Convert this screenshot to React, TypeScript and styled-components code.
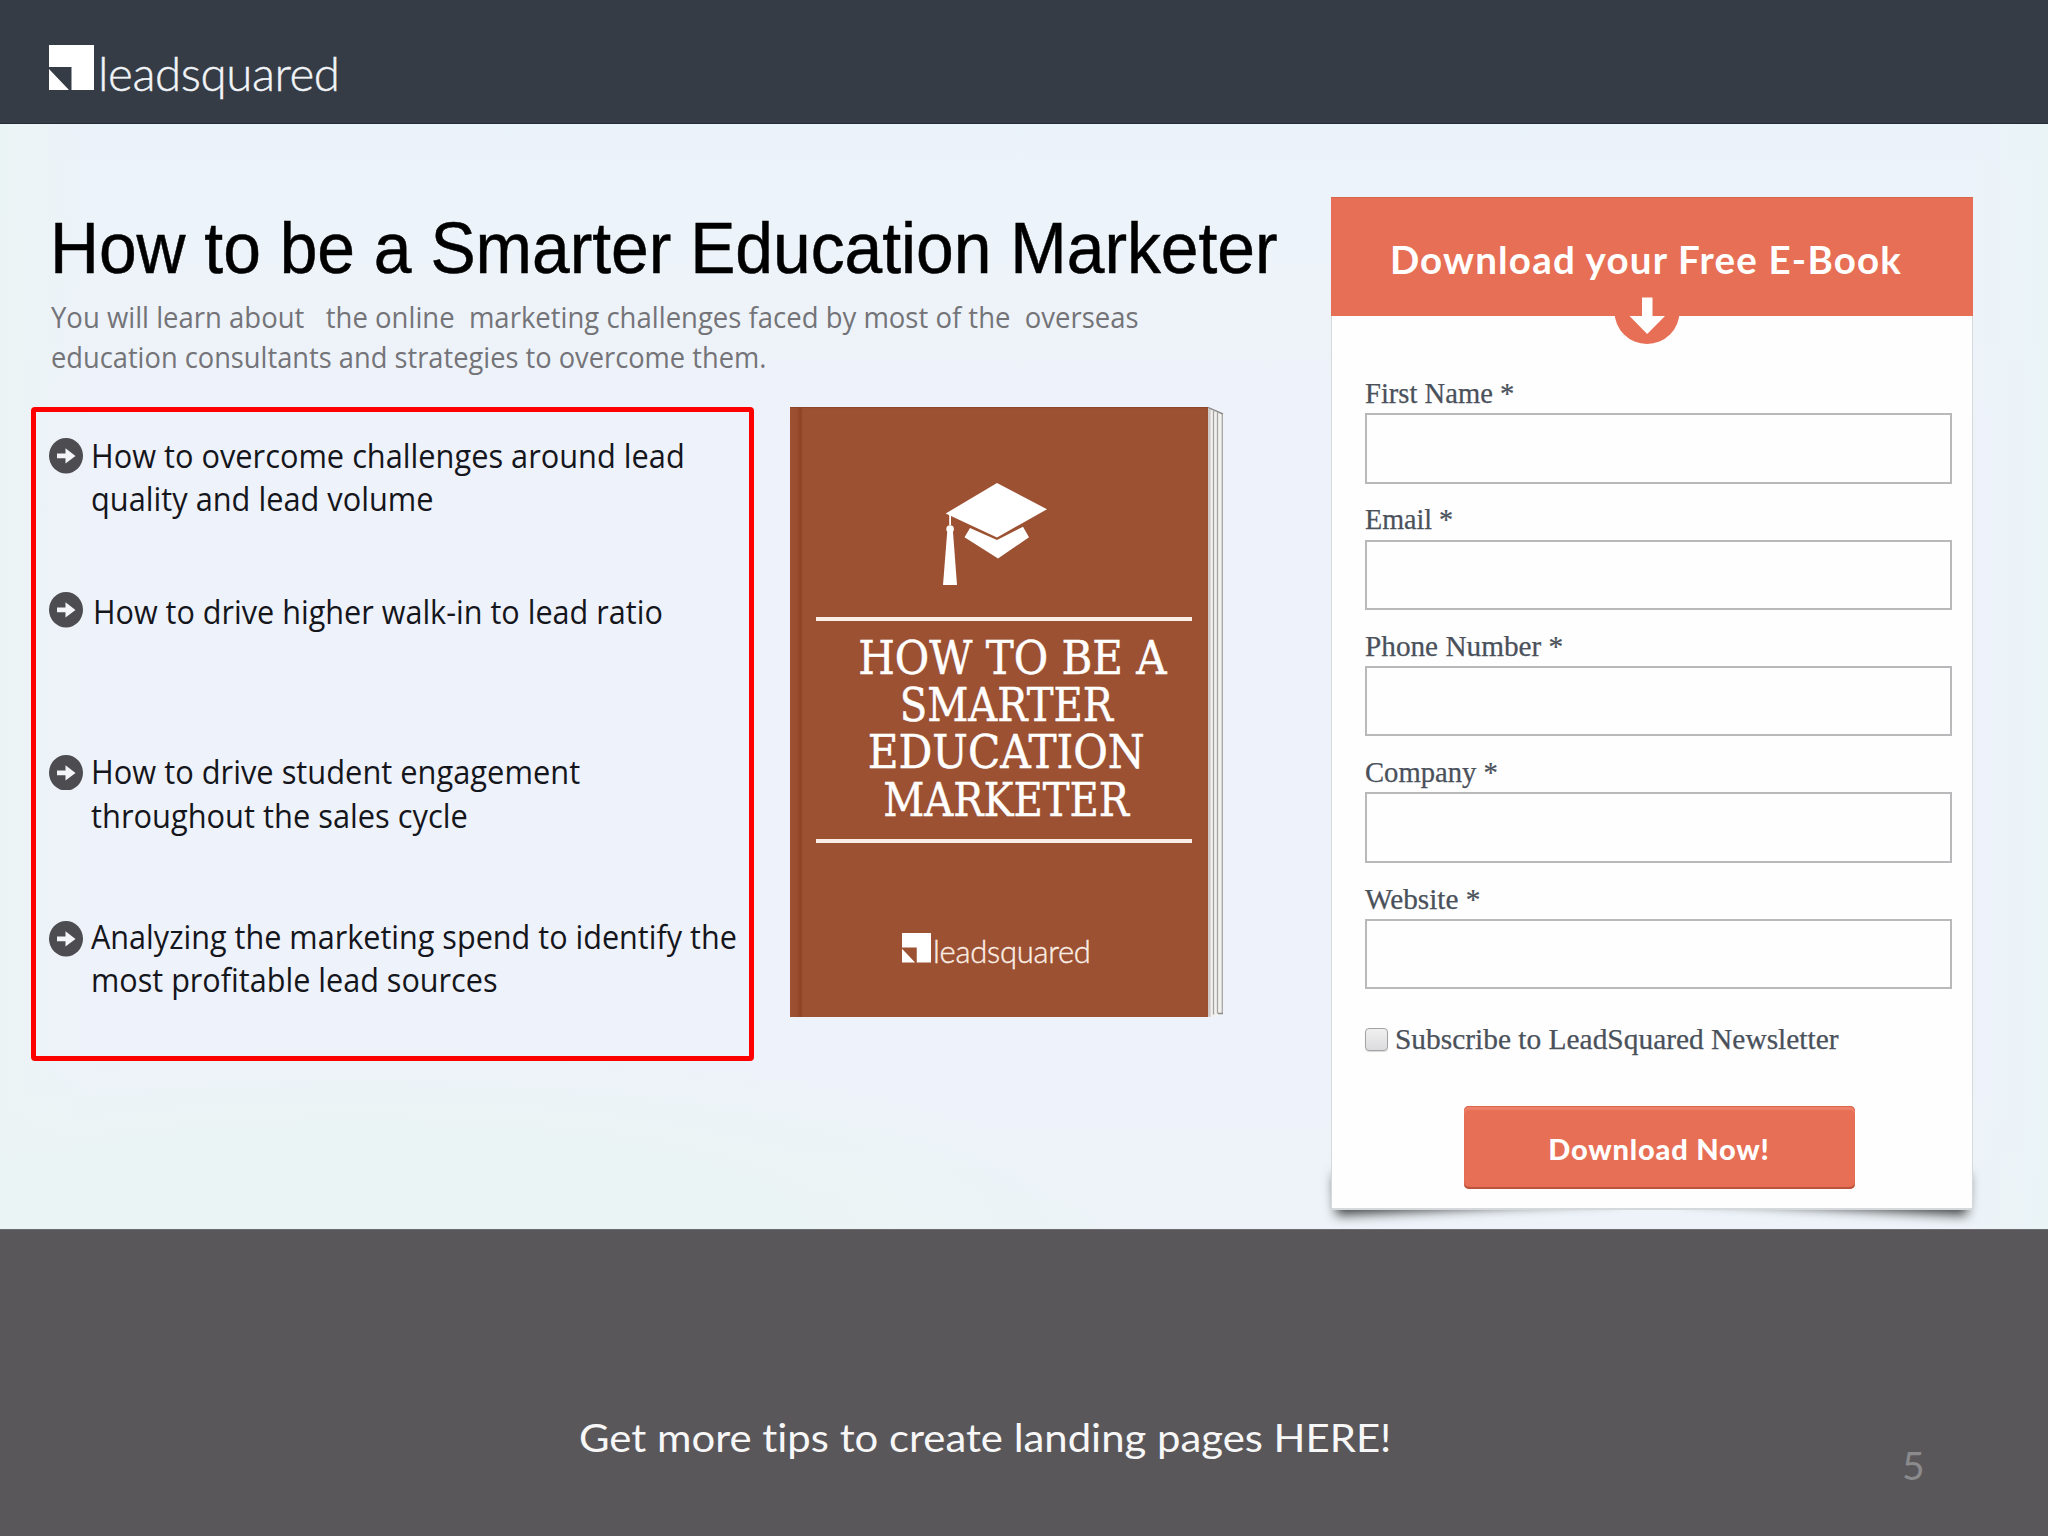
import React from "react";
import styled, { createGlobalStyle } from "styled-components";

const GlobalStyle = createGlobalStyle`
  *, *::before, *::after { box-sizing: border-box; }
  body { margin: 0; background: #5a575b; }
`;

const sans = `"Open Sans", "Noto Sans", sans-serif`;
const lato = `Lato, "Open Sans", sans-serif`;
const serif = `"Liberation Serif", serif`;
const coral = "#e76f55";

const Page = styled.div`
  width: 2048px;
  height: 1536px;
  display: flex;
  flex-direction: column;
  overflow: hidden;
`;

/* One line of copy, narrowed or widened horizontally by $sx. */
const Line = styled.span<{ $sx?: number; $origin?: string }>`
  display: block;
  width: max-content;
  white-space: pre;
  transform: scaleX(${(p) => p.$sx ?? 1});
  transform-origin: ${(p) => p.$origin ?? "left"} center;
`;

const Header = styled.header`
  height: 124px;
  flex: none;
  padding: 45px 0 0 49px;
  background: #363c45;
  border-bottom: 1px solid #262d38;
`;

const LogoRow = styled.div<{ $gap: number }>`
  display: flex;
  align-items: flex-start;
  gap: ${(p) => p.$gap}px;
`;

const LogoMark = styled.svg<{ $size: number }>`
  display: block;
  flex: none;
  width: ${(p) => p.$size}px;
  height: ${(p) => p.$size}px;
`;

const LogoWord = styled.span<{ $size: number; $top: number; $color: string }>`
  margin-top: ${(p) => p.$top}px;
  font: 300 ${(p) => p.$size}px/1 ${lato};
  letter-spacing: -0.009em;
  -webkit-text-stroke: 0.4px ${(p) => p.$color};
  color: ${(p) => p.$color};
`;

function Logo(props: { mark: number; font: number; top: number; gap: number; color: string }) {
  return (
    <LogoRow $gap={props.gap}>
      <LogoMark $size={props.mark} viewBox="0 0 45 45">
        <path d="M0 0H45V45H22.5V22H0ZM0 24L20 45H0Z" fill="#fff" />
      </LogoMark>
      <LogoWord $size={props.font} $top={props.top} $color={props.color}>
        leadsquared
      </LogoWord>
    </LogoRow>
  );
}

const Hero = styled.main`
  position: relative;
  z-index: 0;
  flex: none;
  height: 1105px;
  display: flex;
  align-items: flex-start;
  overflow: hidden;
  background:
    radial-gradient(ellipse 800px 190px at 360px 100%, #ebf4f5 55%, rgba(235, 244, 245, 0) 100%),
    linear-gradient(90deg, #ebf4f5 0, rgba(235, 244, 245, 0) 90px),
    linear-gradient(270deg, #eaf4f7 0, rgba(234, 244, 247, 0) 90px),
    linear-gradient(180deg, #ebf3fa 0, #edf3f9 160px, #eef2fa 300px, #eef2fa 960px, #edf3f8 1105px);
`;

const Intro = styled.section`
  width: 1330.5px;
  flex: none;
  padding: 84px 0 0 31px;
`;

const Title = styled.h1`
  margin: 0;
  padding-left: 18.8px;
  font: 400 72px/80px "Liberation Sans", Arial, sans-serif;
  -webkit-text-stroke: 0.5px #000;
  color: #000;
`;

const Subtitle = styled.p`
  margin: 9px 0 0;
  padding-left: 20px;
  font: 400 29.5px/39.5px ${sans};
  color: #747478;
`;

const Showcase = styled.div`
  display: flex;
  align-items: flex-start;
  gap: 36px;
  margin-top: 30.5px;
`;

const Highlights = styled.ul`
  width: 722.5px;
  height: 654px;
  margin: 0;
  padding: 22.3px 0 0 13px;
  list-style: none;
  border: 5.5px solid #fe0000;
  border-radius: 4px;
`;

const Highlight = styled.li<{ $before: number; $iconTop: number; $gap?: number }>`
  display: flex;
  align-items: flex-start;
  gap: ${(p) => p.$gap ?? 7.5}px;
  margin-top: ${(p) => p.$before}px;
  font: 400 33px/43.4px ${sans};
  color: #15161c;

  svg {
    display: block;
    flex: none;
    width: 34px;
    height: 35.5px;
    margin-top: ${(p) => p.$iconTop}px;
  }
`;

function ArrowBullet() {
  return (
    <svg viewBox="0 0 34 35.5" aria-hidden="true">
      <ellipse cx="17" cy="17.75" rx="17" ry="17.75" fill="#4c4c51" />
      <path d="M8 15.6H16.5V10.3L26.5 17.9L16.5 25.5V20.2H8Z" fill="#f4f5f8" />
    </svg>
  );
}

const Book = styled.div`
  display: flex;
  height: 610.5px;
`;

const Cover = styled.div`
  width: 418px;
  padding-left: 12px;
  background: linear-gradient(90deg, #9f5233 0, #9a4e2f 7px, #8f4425 10px, #8f4425 11px, #9c5132 13px);
  box-shadow: inset 0 1px 1px #8c4527;
`;

const CapIcon = styled.svg`
  display: block;
  width: 106px;
  height: 104px;
  margin: 76px 0 0 140px;
`;

const Rule = styled.div<{ $top: number }>`
  width: 376.5px;
  height: 4px;
  margin: ${(p) => p.$top}px 0 0 14px;
  background: #fbeee6;
`;

const CoverTitle = styled.h2`
  margin: 14.3px 0 0 3px;
  font: 400 46.4px/47.3px "DejaVu Serif", serif;
  -webkit-text-stroke: 0.5px #fff;
  color: #fff;
`;

const CoverLine = styled.div<{ $shift?: number }>`
  display: flex;
  justify-content: center;
  padding-left: ${(p) => p.$shift ?? 0}px;
`;

const CoverLogo = styled.div`
  margin: 90px 0 0 100px;
`;

const Pages = styled.svg`
  display: block;
  width: 16px;
  height: 610.5px;
`;

const Card = styled.section`
  position: relative;
  flex: none;
  width: 642px;
  height: 1013px;
  margin-top: 73px;

  &::before,
  &::after {
    content: "";
    position: absolute;
    z-index: -1;
    bottom: 24px;
    width: 44%;
    height: 40px;
    box-shadow: 0 22px 12px rgba(0, 0, 0, 0.75);
  }
  &::before {
    left: 3px;
    transform: rotate(-3deg);
  }
  &::after {
    right: 3px;
    transform: rotate(3deg);
  }
`;

const CardHead = styled.div`
  position: relative;
  height: 119px;
  padding: 41px 11px 0 0;
  display: flex;
  justify-content: center;
  background: ${coral};
  border-top: 1px solid #d5654d;
  font: 700 38.5px/40px ${lato};
  letter-spacing: 1.2px;
  color: #fff;
`;

const DownBadge = styled.svg`
  position: absolute;
  left: 283px;
  top: 79px;
  width: 66px;
  height: 68px;
`;

const Form = styled.form`
  height: 894px;
  padding: 63px 20.5px 0 33.5px;
  background: #fefefe;
  border: 1px solid #d6d8dc;
  border-top: 0;
  border-bottom: 2px solid #d5d9db;
`;

const Fields = styled.div`
  display: flex;
  flex-direction: column;
  gap: 20.7px;
`;

const Field = styled.label`
  display: block;
  font: 400 28.5px/30px ${serif};
  -webkit-text-stroke: 0.25px #4a515b;
  color: #4a515b;
`;

const Input = styled.input`
  display: block;
  width: 587px;
  height: 70.4px;
  margin-top: 5.3px;
  padding: 0 12px;
  border: 2px solid #b9b9bb;
  border-radius: 0;
  background: #fefefe;
  font: inherit;
  outline: 0;
  position: relative;
  top: -1px;
`;

const Subscribe = styled.label`
  display: flex;
  align-items: flex-start;
  gap: 7px;
  margin-top: 34.8px;
  font: 400 28.5px/30px ${serif};
  -webkit-text-stroke: 0.25px #4a515b;
  color: #4a515b;
`;

const Check = styled.input`
  appearance: none;
  width: 23px;
  height: 23px;
  margin: 3px 0 0;
  border: 1.5px solid #a3a3a5;
  border-radius: 4px;
  background: linear-gradient(#f1f0f1, #dcdbdd);
  box-shadow: 0 1px 1px rgba(0, 0, 0, 0.15);
`;

const Submit = styled.button`
  display: block;
  width: 391px;
  height: 83px;
  margin: 51px 0 0 98.5px;
  padding: 3px 0 0;
  border: 0;
  border-radius: 5px;
  background: ${coral};
  box-shadow: inset 0 1px 0 #d9654b, inset 0 4px 1px #ee8069, inset 0 -2px 1px #b9523c;
  font: 900 29px/34px ${lato};
  letter-spacing: 0.8px;
  color: #fff;
`;

const Footer = styled.footer`
  flex: 1;
  display: flex;
  align-items: flex-start;
  justify-content: space-between;
  padding: 182px 123.5px 0 578.5px;
  background: #5a575b;
  border-top: 1px solid #6c6a6e;
  font: 400 39px/50px ${lato};
  font-variant-ligatures: none;
  color: #f7f7f8;
`;

const PageNumber = styled.span`
  padding-top: 28px;
  color: #8b8a8d;
`;

const bullets = [
  { before: 0, iconTop: 4.5, sx: 0.932, lines: ["How to overcome challenges around lead", "quality and lead volume"] },
  { before: 69.2, iconTop: 2.5, sx: 0.927, gap: 9.5, lines: ["How to drive higher walk-in to lead ratio"] },
  { before: 117, iconTop: 4.5, sx: 0.934, lines: ["How to drive student engagement", "throughout the sales cycle"] },
  { before: 77.7, iconTop: 6.7, sx: 0.927, lines: ["Analyzing the marketing spend to identify the", "most profitable lead sources"] },
];

const coverLines = [
  { text: "HOW TO BE A", sx: 0.905, shift: 13 },
  { text: "SMARTER", sx: 0.865 },
  { text: "EDUCATION", sx: 0.91 },
  { text: "MARKETER", sx: 0.865 },
];

const fields = [
  { label: "First Name *", sx: 1.003 },
  { label: "Email *", sx: 0.985 },
  { label: "Phone Number *", sx: 1.026 },
  { label: "Company *", sx: 1.005 },
  { label: "Website *", sx: 1.026 },
];

export default function App() {
  return (
    <Page>
      <GlobalStyle />
      <Header>
        <Logo mark={45} font={47.5} top={3.5} gap={4} color="#f1f4f8" />
      </Header>
      <Hero>
        <Intro>
          <Title>
            <Line $sx={0.941}>How to be a Smarter Education Marketer</Line>
          </Title>
          <Subtitle>
            <Line $sx={0.932}>
              {"You will learn about   the online  marketing challenges faced by most of the  overseas"}
            </Line>
            <Line $sx={0.924}>education consultants and strategies to overcome them.</Line>
          </Subtitle>
          <Showcase>
            <Highlights>
              {bullets.map((b) => (
                <Highlight key={b.lines[0]} $before={b.before} $iconTop={b.iconTop} $gap={b.gap}>
                  <ArrowBullet />
                  <div>
                    {b.lines.map((l) => (
                      <Line key={l} $sx={b.sx}>
                        {l}
                      </Line>
                    ))}
                  </div>
                </Highlight>
              ))}
            </Highlights>
            <Book>
              <Cover>
                <CapIcon viewBox="0 0 106 104" fill="#fff">
                  <path d="M55 0L105 26.2L55 54.5L3.7 30.5Z" />
                  <path d="M28 45L55 57L81 43.7L87 54.3L56 75.4L22.5 54.3Z" />
                  <path d="M7.2 32H9V42H7.2Z" />
                  <circle cx="8.1" cy="46" r="3.8" />
                  <path d="M5.2 49H11L15 102H1Z" />
                </CapIcon>
                <Rule $top={30} />
                <CoverTitle>
                  {coverLines.map((c) => (
                    <CoverLine key={c.text} $shift={c.shift}>
                      <Line $sx={c.sx} $origin="center">
                        {c.text}
                      </Line>
                    </CoverLine>
                  ))}
                </CoverTitle>
                <Rule $top={15.5} />
                <CoverLogo>
                  <Logo mark={29.5} font={31} top={3} gap={2} color="#fbeee6" />
                </CoverLogo>
              </Cover>
              <Pages viewBox="0 0 16 611">
                <path d="M0 0L15 7V607L4 611H0Z" fill="#f1f1f0" />
                <path d="M1.5 2V610M5.5 4V608M9.5 5.5V607M14.3 7V607" stroke="#a6a2a0" strokeWidth="1.3" />
                <path d="M0 2V610" stroke="#cfcac8" strokeWidth="5" />
                <path d="M0 0.5L15 7M10 607H15" stroke="#8f8c8a" strokeWidth="1.4" />
              </Pages>
            </Book>
          </Showcase>
        </Intro>
        <Card>
          <CardHead>
            <span>Download your Free E-Book</span>
            <DownBadge viewBox="0 0 66 68">
              <circle cx="33" cy="34.5" r="32.5" fill={coral} />
              <path d="M28 20.5H38.5V39H51L33.2 57L15.5 39H28Z" fill="#fff" />
            </DownBadge>
          </CardHead>
          <Form>
            <Fields>
              {fields.map((f) => (
                <Field key={f.label}>
                  <Line $sx={f.sx}>{f.label}</Line>
                  <Input type="text" />
                </Field>
              ))}
            </Fields>
            <Subscribe>
              <Check type="checkbox" />
              <Line $sx={1.032}>Subscribe to LeadSquared Newsletter</Line>
            </Subscribe>
            <Submit type="button">Download Now!</Submit>
          </Form>
        </Card>
      </Hero>
      <Footer>
        <Line $sx={1.073}>Get more tips to create landing pages HERE!</Line>
        <PageNumber>5</PageNumber>
      </Footer>
    </Page>
  );
}
